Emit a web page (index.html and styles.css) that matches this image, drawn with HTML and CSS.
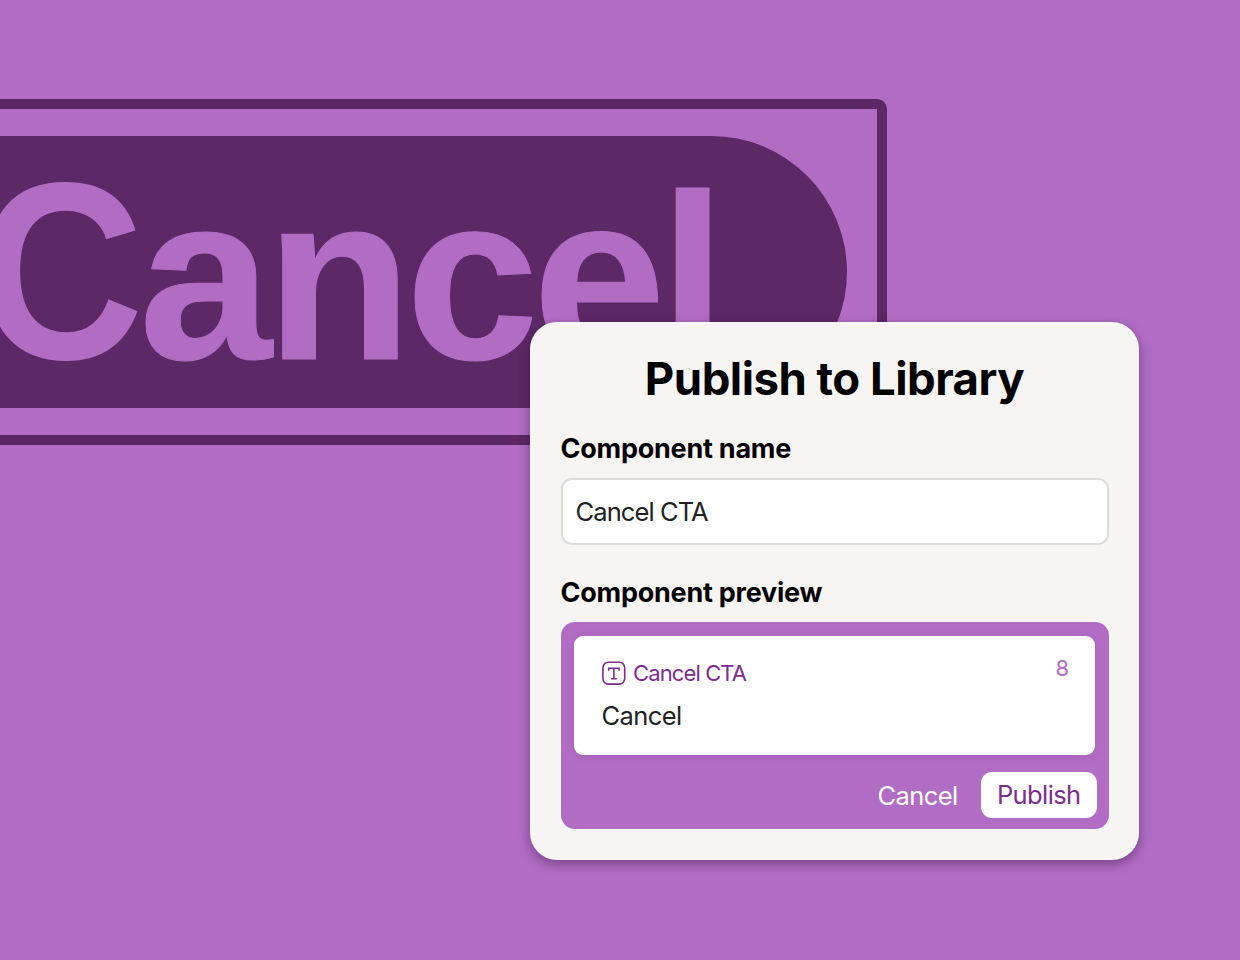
FILE: index.html
```html
<!DOCTYPE html>
<html lang="en">
<head>
<meta charset="utf-8">
<title>Publish to Library</title>
<link rel="stylesheet" href="styles.css">
</head>
<body>
<main class="stage">
  <div class="selection">
    <div class="cta"><span class="cta-cap">C</span><span class="cta-rest">ancel</span></div>
  </div>
  <section class="dialog">
    <h1 class="title"><span>Publish to Library</span></h1>
    <h2 class="label"><span>Component name</span></h2>
    <div class="field"><span>Cancel CTA</span></div>
    <h2 class="label"><span>Component preview</span></h2>
    <div class="preview">
      <div class="card">
        <div class="card-main">
          <div class="card-head">
            <svg class="type-icon" width="24" height="24" viewBox="0 0 24 24" fill="none" stroke="currentColor" stroke-width="1.6">
              <rect x=".9" y="1.3" width="21.8" height="21.8" rx="5.5"/>
              <path d="M6.7 9.8V7.2h10.4v2.6M11.9 7.2v10.6M9 17.8h5.8"/>
            </svg>
            <span class="card-name">Cancel CTA</span>
          </div>
          <div class="card-text"><span>Cancel</span></div>
        </div>
        <span class="count">8</span>
      </div>
      <div class="actions">
        <span class="cancel">Cancel</span>
        <span class="publish">Publish</span>
      </div>
    </div>
  </section>
</main>
</body>
</html>
```

FILE: styles.css
```css
* { box-sizing: border-box; }
body { margin: 0; }
.stage {
  position: relative;
  width: 1240px;
  height: 960px;
  padding-top: 99px;
  overflow: hidden;
  background: #b16dc4;
  font-family: Inter, "Liberation Sans", sans-serif;
  white-space: nowrap;
}
.selection {
  width: 1087px;
  height: 346px;
  margin-left: -200px;
  padding: 27px 30px 27px 0;
  border: 10.5px solid #5c2865;
  border-radius: 10px;
}
.cta {
  height: 272px;
  padding: 5px 0 0 153px;
  border-radius: 136px;
  background: #5c2865;
  color: #b16dc4;
  font: bold 236px/272px "Liberation Sans", sans-serif;
}
.cta-cap {
  display: inline-block;
  width: 176px;
  font-size: 252px;
  line-height: 1;
  transform: scaleX(.915);
  transform-origin: 167px 50%;
}
.cta-rest {
  display: inline-block;
  letter-spacing: -6px;
  transform: scaleX(1.013);
  transform-origin: 0 50%;
  -webkit-text-stroke: 1px #b16dc4;
}
.dialog {
  position: absolute;
  left: 530px;
  top: 322px;
  width: 609px;
  height: 538px;
  padding: 28px 30.5px 30px;
  border-radius: 27px;
  background: #f6f5f3;
  box-shadow: 0 4px 12px rgba(40, 10, 50, .42);
}
.title {
  margin: 0;
  height: 58px;
  text-align: center;
  font-size: 45.5px;
  line-height: 58px;
  font-weight: 650;
  letter-spacing: -.5px;
  color: #000;
}
.label {
  margin: 22px 0 12px;
  height: 36px;
  font-size: 27px;
  line-height: 38px;
  font-weight: 650;
  letter-spacing: -.24px;
  color: #000;
}
.field {
  height: 67px;
  padding-left: 13px;
  border: 2px solid #dddcd8;
  border-radius: 11px;
  background: #fff;
  color: #222;
  font-size: 25.5px;
  line-height: 63px;
  letter-spacing: -.9px;
}
.field + .label { margin-top: 29px; }
.preview {
  height: 207px;
  padding: 13.5px 11.5px 11px 13px;
  border-radius: 14px;
  background: #b16dc4;
}
.card {
  display: flex;
  justify-content: space-between;
  width: 521.5px;
  height: 119.5px;
  padding: 22.5px 26px 0 28px;
  border-radius: 9px;
  background: #fff;
  box-shadow: 0 2px 8px rgba(90, 30, 110, .12);
}
.card-head {
  display: flex;
  align-items: center;
  gap: 7.5px;
  height: 30px;
  color: #7b2d8e;
}
.card-name { font-size: 22px; letter-spacing: -.88px; }
.card-text {
  margin-top: 10px;
  color: #222;
  font-size: 25.5px;
  line-height: 36px;
  letter-spacing: -.6px;
}
.count { margin-top: -5px; font-size: 22px; line-height: 30px; color: #b16dc4; }
.actions {
  display: flex;
  justify-content: flex-end;
  align-items: center;
  gap: 23px;
  margin-top: 17px;
  font-size: 25.5px;
  letter-spacing: -.6px;
}
.cancel { color: #fff; }
.publish {
  width: 116.5px;
  height: 46px;
  border-radius: 11px;
  background: #fff;
  color: #7b2d8e;
  line-height: 46px;
  text-align: center;
}
```
